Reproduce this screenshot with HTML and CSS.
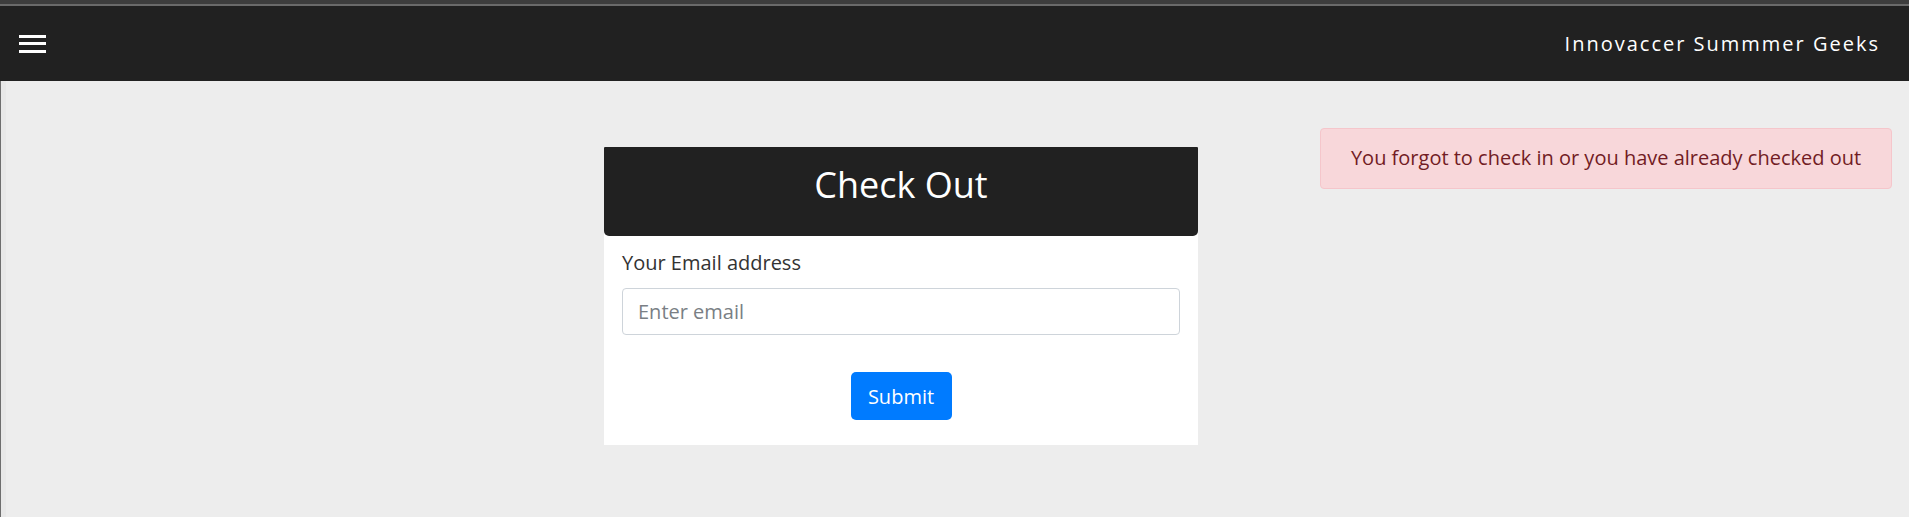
FILE: index.html
```html
<!DOCTYPE html>
<html lang="en">
<head>
<meta charset="utf-8">
<title>Check Out</title>
<link rel="stylesheet" href="styles.css">
</head>
<body>
<div class="topstrip"></div>
<nav class="navbar">
  <button class="menu" aria-label="Menu">
    <span class="bar"></span><span class="bar"></span><span class="bar"></span>
  </button>
  <span class="brand">Innovaccer Summmer Geeks</span>
</nav>
<main class="main">
  <section class="card">
    <div class="card-header"><h1 class="card-title">Check Out</h1></div>
    <form class="card-body">
      <label class="label" for="email">Your Email address</label>
      <input class="input" id="email" type="email" placeholder="Enter email">
      <div class="actions"><button class="btn" type="button">Submit</button></div>
    </form>
  </section>
  <div class="alert">You forgot to check in or you have already checked out</div>
</main>
</body>
</html>
```
FILE: styles.css
```css
* { box-sizing: border-box; }
html, body { margin: 0; padding: 0; height: 100%; }
body {
  background: #ededed;
  font-family: "Open Sans", "Noto Sans", sans-serif;
  color: #333;
  overflow: hidden;
}
.topstrip {
  height: 6px;
  background: #3d3d3d;
  border-bottom: 2px solid #6a6a6a;
}
.navbar {
  height: 75px;
  background: #212121;
  display: flex;
  align-items: center;
  justify-content: space-between;
  padding: 0 29px 0 19px;
}
.menu {
  width: 27px;
  height: 18px;
  padding: 0;
  border: 0;
  background: none;
  display: flex;
  flex-direction: column;
  justify-content: space-between;
}
.bar { display: block; height: 3px; width: 27px; background: #fff; }
.brand {
  color: #fff;
  font-size: 20px;
  letter-spacing: 2px;
}
.main {
  min-height: calc(100% - 81px);
  border-left: 1px solid #6e6e6e;
  box-shadow: inset 5px 0 0 #e8e8e8;
  display: flex;
  align-items: flex-start;
  padding-left: 603px;
}
.card {
  width: 594px;
  margin-top: 66px;
  background: #fff;
}
.card-header {
  height: 89px;
  background: #212121;
  border-radius: 1px 1px 5px 5px;
  padding-top: 16px;
  text-align: center;
}
.card-title {
  margin: 0;
  color: #fff;
  font-weight: 400;
  font-size: 36px;
  line-height: 1.2;
}
.card-body {
  padding: 12px 18px 25px;
  display: flex;
  flex-direction: column;
}
.label {
  font-size: 20px;
  line-height: 30px;
  font-weight: 500;
  color: #333;
  margin-bottom: 10px;
}
.input {
  height: 47px;
  border: 1px solid #ced4da;
  border-radius: 4px;
  padding: 0 15px;
  font-family: inherit;
  font-size: 20px;
  color: #495057;
}
.input::placeholder { color: #7a7f85; }
.actions {
  display: flex;
  justify-content: center;
  margin-top: 37px;
}
.btn {
  height: 48px;
  width: 101px;
  padding: 0;
  background: #007bff;
  color: #fff;
  border: 0;
  border-radius: 5px;
  font-family: inherit;
  font-size: 20px;
}
.alert {
  margin-top: 47px;
  margin-left: 122px;
  width: 572px;
  padding: 14px 0 15px;
  background: #f8d7da;
  border: 1px solid #f5c6cb;
  border-radius: 4px;
  color: #721c24;
  font-size: 20px;
  line-height: 30px;
  text-align: center;
}
```
